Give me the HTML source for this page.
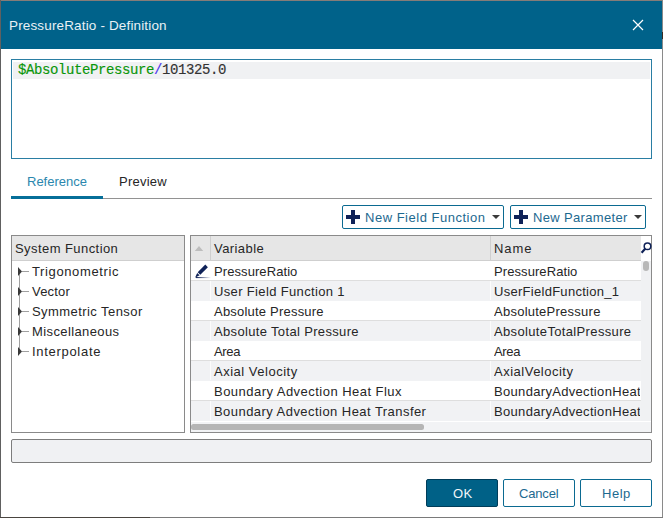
<!DOCTYPE html>
<html><head><meta charset="utf-8">
<style>
*{margin:0;padding:0;box-sizing:border-box}
html,body{width:663px;height:518px;overflow:hidden;background:#fff;font-family:"Liberation Sans",sans-serif;color:#262626}
.a{position:absolute}
.t{position:absolute;white-space:pre;font-size:13px;line-height:16px}
</style></head><body>
<div class="a" style="left:0px;top:0px;width:663px;height:1px;background:#857c78"></div>
<div class="a" style="left:0px;top:0px;width:1px;height:518px;background:#606060"></div>
<div class="a" style="left:662px;top:0px;width:1px;height:518px;background:#8a8a8a"></div>
<div class="a" style="left:662px;top:32px;width:1px;height:7px;background:#3a2a20"></div>
<div class="a" style="left:0px;top:517px;width:663px;height:1px;background:#7a7a7a"></div>
<div class="a" style="left:0px;top:517px;width:150px;height:1px;background:#4a4540"></div>
<div class="a" style="left:1px;top:1px;width:661px;height:48px;background:#00628a"></div>
<div class="t" style="left:9px;top:18px;color:#e9f1f5;font-size:13.5px;letter-spacing:0.15px;">PressureRatio - Definition</div>
<svg class="a" style="left:632px;top:19px" width="12" height="12" viewBox="0 0 12 12"><path d="M1 1L11 11M11 1L1 11" stroke="#fff" stroke-width="1.2"/></svg>
<div class="a" style="left:11px;top:59px;width:641px;height:100px;border:1px solid #2a7ea3"></div>
<div class="a" style="left:13px;top:62px;width:637px;height:17px;background:#f0f1f3"></div>
<div class="t" style="left:18px;top:62px;font-family:'Liberation Mono',monospace;font-size:14px;letter-spacing:-0.4px;line-height:16px;-webkit-text-stroke:0.15px"><span style="color:#0a960a;-webkit-text-stroke-color:#0a960a">$AbsolutePressure</span><span style="color:#4f35ee;-webkit-text-stroke-color:#4f35ee">/</span><span style="color:#333;-webkit-text-stroke-color:#333">101325.0</span></div>
<div class="a" style="left:11px;top:198px;width:641px;height:1px;background:#929292"></div>
<div class="a" style="left:11px;top:196px;width:92px;height:3px;background:#066f99"></div>
<div class="t" style="left:27px;top:174px;color:#2b87ae;font-size:13px;letter-spacing:0.0px;">Reference</div>
<div class="t" style="left:119px;top:174px;color:#262626;font-size:13px;letter-spacing:0.25px;">Preview</div>
<div class="a" style="left:342px;top:205px;width:162px;height:24px;border:1px solid #0b6a91;border-radius:2px"></div>
<svg class="a" style="left:346px;top:210px" width="14" height="14" viewBox="0 0 14 14"><path d="M5 0h4v5h5v4h-5v5h-4v-5h-5v-4h5z" fill="#0f2258"/></svg>
<div class="t" style="left:365px;top:210px;color:#1d6990;font-size:13px;letter-spacing:0.51px;">New Field Function</div>
<svg class="a" style="left:492px;top:215px" width="8" height="4" viewBox="0 0 8 4"><path d="M0 0h8l-4 4z" fill="#3a3a3a"/></svg>
<div class="a" style="left:510px;top:205px;width:136px;height:24px;border:1px solid #0b6a91;border-radius:2px"></div>
<svg class="a" style="left:514px;top:210px" width="14" height="14" viewBox="0 0 14 14"><path d="M5 0h4v5h5v4h-5v5h-4v-5h-5v-4h5z" fill="#0f2258"/></svg>
<div class="t" style="left:533px;top:210px;color:#1d6990;font-size:13px;letter-spacing:0.33px;">New Parameter</div>
<svg class="a" style="left:634px;top:215px" width="8" height="4" viewBox="0 0 8 4"><path d="M0 0h8l-4 4z" fill="#3a3a3a"/></svg>
<div class="a" style="left:11px;top:235px;width:174px;height:198px;border:1px solid #8a8a8a"></div>
<div class="a" style="left:12px;top:236px;width:172px;height:25px;background:#e6e6e6;border-bottom:1px solid #cfcfcf"></div>
<div class="t" style="left:15px;top:241px;color:#262626;font-size:13px;letter-spacing:0.43px;">System Function</div>
<div class="a" style="left:19px;top:271px;width:1px;height:80px;background:#a0a0a0"></div>
<svg class="a" style="left:18px;top:267px" width="12" height="9" viewBox="0 0 12 9"><path d="M0 0l4 4.5l-4 4.5z" fill="#3a3a3a"/><rect x="4" y="4" width="7" height="1" fill="#a0a0a0"/></svg>
<div class="t" style="left:32px;top:264px;color:#262626;font-size:13px;letter-spacing:0.62px;">Trigonometric</div>
<svg class="a" style="left:18px;top:287px" width="12" height="9" viewBox="0 0 12 9"><path d="M0 0l4 4.5l-4 4.5z" fill="#3a3a3a"/><rect x="4" y="4" width="7" height="1" fill="#a0a0a0"/></svg>
<div class="t" style="left:32px;top:284px;color:#262626;font-size:13px;letter-spacing:0.2px;">Vector</div>
<svg class="a" style="left:18px;top:307px" width="12" height="9" viewBox="0 0 12 9"><path d="M0 0l4 4.5l-4 4.5z" fill="#3a3a3a"/><rect x="4" y="4" width="7" height="1" fill="#a0a0a0"/></svg>
<div class="t" style="left:32px;top:304px;color:#262626;font-size:13px;letter-spacing:0.43px;">Symmetric Tensor</div>
<svg class="a" style="left:18px;top:327px" width="12" height="9" viewBox="0 0 12 9"><path d="M0 0l4 4.5l-4 4.5z" fill="#3a3a3a"/><rect x="4" y="4" width="7" height="1" fill="#a0a0a0"/></svg>
<div class="t" style="left:32px;top:324px;color:#262626;font-size:13px;letter-spacing:0.39px;">Miscellaneous</div>
<svg class="a" style="left:18px;top:347px" width="12" height="9" viewBox="0 0 12 9"><path d="M0 0l4 4.5l-4 4.5z" fill="#3a3a3a"/><rect x="4" y="4" width="7" height="1" fill="#a0a0a0"/></svg>
<div class="t" style="left:32px;top:344px;color:#262626;font-size:13px;letter-spacing:0.7px;">Interpolate</div>
<div class="a" style="left:190px;top:235px;width:462px;height:198px;border:1px solid #8a8a8a"></div>
<div class="a" style="left:191px;top:236px;width:450px;height:25px;background:#e6e6e6;border-bottom:1px solid #cfcfcf"></div>
<div class="a" style="left:210px;top:236px;width:1px;height:24px;background:#cfcfcf"></div>
<div class="a" style="left:490px;top:236px;width:1px;height:24px;background:#cfcfcf"></div>
<svg class="a" style="left:194px;top:245px" width="10" height="7" viewBox="0 0 10 7"><path d="M5 1L9.2 6H0.8z" fill="#bdbdbd"/></svg>
<div class="t" style="left:214px;top:241px;color:#262626;font-size:13px;letter-spacing:0.43px;">Variable</div>
<div class="t" style="left:494px;top:241px;color:#262626;font-size:13px;letter-spacing:0.93px;">Name</div>
<svg class="a" style="left:640px;top:240px" width="12" height="14" viewBox="0 0 12 14"><circle cx="7.5" cy="6.2" r="3.3" fill="none" stroke="#0f2258" stroke-width="1.5"/><path d="M5.4 8.6L1.6 12.8" stroke="#0f2258" stroke-width="2.2"/></svg>
<div class="a" style="left:641px;top:261px;width:10px;height:160px;background:#f0f1f3"></div>
<div class="a" style="left:643px;top:261px;width:6px;height:10px;background:#b8b8b8;border-radius:3px"></div>
<div class="a" style="left:191px;top:261px;width:450px;height:20px;background:#ffffff"></div>
<div class="a" style="left:191px;top:280px;width:450px;height:1px;background:#dedede"></div>
<div class="t" style="left:214px;top:264px;color:#262626;font-size:13px;letter-spacing:0.08px;">PressureRatio</div>
<div class="a" style="left:494px;top:261px;width:146px;height:20px;overflow:hidden"><div class="t" style="left:0px;top:3px;color:#262626;font-size:13px;letter-spacing:0.08px;">PressureRatio</div></div>
<div class="a" style="left:191px;top:281px;width:450px;height:20px;background:#f1f2f4"></div>
<div class="a" style="left:210px;top:281px;width:1px;height:19px;background:#fcfcfc"></div>
<div class="a" style="left:490px;top:281px;width:1px;height:19px;background:#fcfcfc"></div>
<div class="t" style="left:214px;top:284px;color:#262626;font-size:13px;letter-spacing:0.35px;">User Field Function 1</div>
<div class="a" style="left:494px;top:281px;width:146px;height:20px;overflow:hidden"><div class="t" style="left:0px;top:3px;color:#262626;font-size:13px;letter-spacing:0.28px;">UserFieldFunction_1</div></div>
<div class="a" style="left:191px;top:301px;width:450px;height:20px;background:#ffffff"></div>
<div class="a" style="left:191px;top:320px;width:450px;height:1px;background:#dedede"></div>
<div class="t" style="left:214px;top:304px;color:#262626;font-size:13px;letter-spacing:0.21px;">Absolute Pressure</div>
<div class="a" style="left:494px;top:301px;width:146px;height:20px;overflow:hidden"><div class="t" style="left:0px;top:3px;color:#262626;font-size:13px;letter-spacing:0.25px;">AbsolutePressure</div></div>
<div class="a" style="left:191px;top:321px;width:450px;height:20px;background:#f1f2f4"></div>
<div class="a" style="left:210px;top:321px;width:1px;height:19px;background:#fcfcfc"></div>
<div class="a" style="left:490px;top:321px;width:1px;height:19px;background:#fcfcfc"></div>
<div class="t" style="left:214px;top:324px;color:#262626;font-size:13px;letter-spacing:0.34px;">Absolute Total Pressure</div>
<div class="a" style="left:494px;top:321px;width:146px;height:20px;overflow:hidden"><div class="t" style="left:0px;top:3px;color:#262626;font-size:13px;letter-spacing:0.35px;">AbsoluteTotalPressure</div></div>
<div class="a" style="left:191px;top:341px;width:450px;height:20px;background:#ffffff"></div>
<div class="a" style="left:191px;top:360px;width:450px;height:1px;background:#dedede"></div>
<div class="t" style="left:214px;top:344px;color:#262626;font-size:13px;letter-spacing:-0.33px;">Area</div>
<div class="a" style="left:494px;top:341px;width:146px;height:20px;overflow:hidden"><div class="t" style="left:0px;top:3px;color:#262626;font-size:13px;letter-spacing:-0.33px;">Area</div></div>
<div class="a" style="left:191px;top:361px;width:450px;height:20px;background:#f1f2f4"></div>
<div class="a" style="left:210px;top:361px;width:1px;height:19px;background:#fcfcfc"></div>
<div class="a" style="left:490px;top:361px;width:1px;height:19px;background:#fcfcfc"></div>
<div class="t" style="left:214px;top:364px;color:#262626;font-size:13px;letter-spacing:0.51px;">Axial Velocity</div>
<div class="a" style="left:494px;top:361px;width:146px;height:20px;overflow:hidden"><div class="t" style="left:0px;top:3px;color:#262626;font-size:13px;letter-spacing:0.5px;">AxialVelocity</div></div>
<div class="a" style="left:191px;top:381px;width:450px;height:20px;background:#ffffff"></div>
<div class="a" style="left:191px;top:400px;width:450px;height:1px;background:#dedede"></div>
<div class="t" style="left:214px;top:384px;color:#262626;font-size:13px;letter-spacing:0.47px;">Boundary Advection Heat Flux</div>
<div class="a" style="left:494px;top:381px;width:146px;height:20px;overflow:hidden"><div class="t" style="left:0px;top:3px;color:#262626;font-size:13px;letter-spacing:0.32px;">BoundaryAdvectionHeat</div></div>
<div class="a" style="left:191px;top:401px;width:450px;height:20px;background:#f1f2f4"></div>
<div class="a" style="left:210px;top:401px;width:1px;height:19px;background:#fcfcfc"></div>
<div class="a" style="left:490px;top:401px;width:1px;height:19px;background:#fcfcfc"></div>
<div class="t" style="left:214px;top:404px;color:#262626;font-size:13px;letter-spacing:0.45px;">Boundary Advection Heat Transfer</div>
<div class="a" style="left:494px;top:401px;width:146px;height:20px;overflow:hidden"><div class="t" style="left:0px;top:3px;color:#262626;font-size:13px;letter-spacing:0.32px;">BoundaryAdvectionHeat</div></div>
<svg class="a" style="left:192px;top:260px" width="20" height="20" viewBox="0 0 20 20"><defs><linearGradient id="pg" x1="0" x2="1"><stop offset="0" stop-color="#0f2258"/><stop offset="1" stop-color="#0f2258" stop-opacity="0"/></linearGradient></defs><path d="M13.3 4.6L15.9 7.2L8.3 14.8L5.7 12.2z" fill="#0f2258"/><path d="M5.2 12.9L7.6 15.3L3 17.8z" fill="#0f2258"/><rect x="4" y="17" width="15" height="1.1" fill="url(#pg)"/></svg>
<div class="a" style="left:191px;top:421px;width:460px;height:11px;background:#f2f3f5;border-top:1px solid #fff"></div>
<div class="a" style="left:191px;top:424px;width:233px;height:6px;background:#b5b5b5;border-radius:2.5px"></div>
<div class="a" style="left:11px;top:439px;width:641px;height:24px;border:1px solid #7d7d7d;border-radius:2px;background:#f0f1f3"></div>
<div class="a" style="left:426px;top:479px;width:72px;height:28px;border:1px solid #003d5a;border-radius:2px;background:#006187"></div>
<div class="t" style="left:453px;top:486px;color:#f2f6f8;font-size:13px;letter-spacing:0.5px;">OK</div>
<div class="a" style="left:503px;top:479px;width:72px;height:28px;border:1px solid #0b6a91;border-radius:2px"></div>
<div class="t" style="left:519px;top:486px;color:#1d6990;font-size:13px;letter-spacing:-0.16px;">Cancel</div>
<div class="a" style="left:580px;top:479px;width:72px;height:28px;border:1px solid #0b6a91;border-radius:2px"></div>
<div class="t" style="left:602px;top:486px;color:#1d6990;font-size:13px;letter-spacing:0.53px;">Help</div>
</body></html>
